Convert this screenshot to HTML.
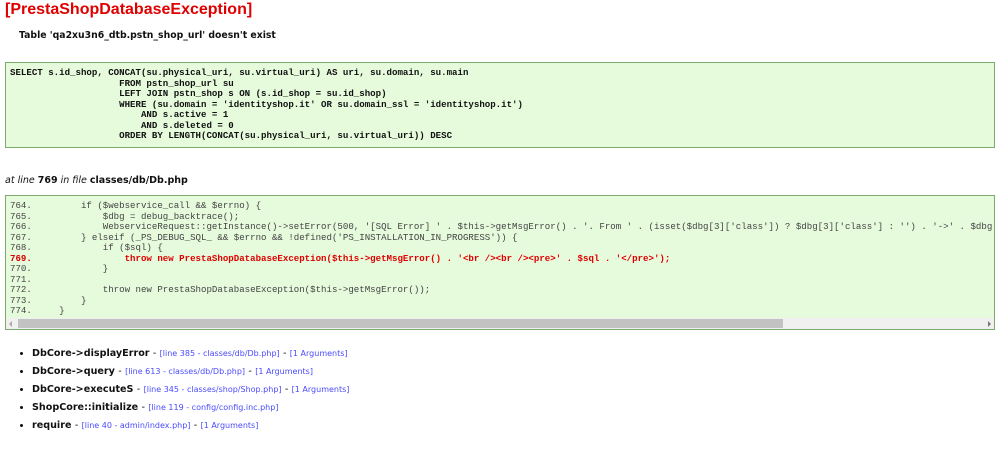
<!DOCTYPE html>
<html><head><style>
body{margin:0;background:#fff;font-family:"DejaVu Sans","Liberation Sans",sans-serif;width:1000px;height:457px;overflow:hidden;position:relative}
.a{position:absolute;white-space:pre}
h1{position:absolute;left:5px;top:1px;margin:0;font-family:"Liberation Sans",sans-serif;font-size:16px;color:#e00000;font-weight:bold}
.msg{left:19px;top:30px;font-size:9.3px;font-weight:bold;color:#111}
.box{position:absolute;left:5px;width:988px;background:#e6fadc;border:1px solid #7daa6f;overflow:hidden}
pre{margin:0;font-family:"Liberation Mono",monospace;font-size:9.1px;line-height:10.5px;color:#333}
.sql pre{font-weight:bold;color:#111;padding:5px 4px}
.code pre{color:#444;padding:5px 4px}
.red{color:#e00000;font-weight:bold}
.at{left:5px;top:175px;font-size:9.5px;color:#111}
ul{position:absolute;left:0;top:345px;margin:0;padding:0 0 0 32px;font-size:9.6px}
li{height:18px;line-height:18px;font-weight:bold;color:#111}
li span{font-weight:normal;font-size:8px;color:#4a4aff}
li i{font-style:normal;font-weight:normal;color:#111}
</style></head><body>
<h1>[PrestaShopDatabaseException]</h1>
<div class="a msg">Table 'qa2xu3n6_dtb.pstn_shop_url' doesn't exist</div>
<div class="box sql" style="top:62px;height:84px"><pre>SELECT s.id_shop, CONCAT(su.physical_uri, su.virtual_uri) AS uri, su.domain, su.main
                    FROM pstn_shop_url su
                    LEFT JOIN pstn_shop s ON (s.id_shop = su.id_shop)
                    WHERE (su.domain = 'identityshop.it' OR su.domain_ssl = 'identityshop.it')
                        AND s.active = 1
                        AND s.deleted = 0
                    ORDER BY LENGTH(CONCAT(su.physical_uri, su.virtual_uri)) DESC</pre></div>
<div class="a at"><i>at line </i><b>769</b><i> in file </i><b>classes/db/Db.php</b></div>
<div class="box code" style="top:195px;height:133px"><pre>764.         if ($webservice_call &amp;&amp; $errno) {
765.             $dbg = debug_backtrace();
766.             WebserviceRequest::getInstance()-&gt;setError(500, '[SQL Error] ' . $this-&gt;getMsgError() . '. From ' . (isset($dbg[3]['class']) ? $dbg[3]['class'] : '') . '-&gt;' . $dbg[3]['function'] . '() Query was : ' . $sql, 97);
767.         } elseif (_PS_DEBUG_SQL_ &amp;&amp; $errno &amp;&amp; !defined('PS_INSTALLATION_IN_PROGRESS')) {
768.             if ($sql) {
<span class="red">769.                 throw new PrestaShopDatabaseException($this-&gt;getMsgError() . '&lt;br /&gt;&lt;br /&gt;&lt;pre&gt;' . $sql . '&lt;/pre&gt;');</span>
770.             }
771.
772.             throw new PrestaShopDatabaseException($this-&gt;getMsgError());
773.         }
774.     }</pre>
<div style="position:absolute;left:0;top:122px;width:988px;height:11px;background:#f0f0f0"></div>
<div style="position:absolute;left:12px;top:123px;width:765px;height:9px;background:#c2c2c2"></div>
<div style="position:absolute;left:3px;top:125px;width:0;height:0;border-top:3px solid transparent;border-bottom:3px solid transparent;border-right:3px solid #aaa"></div>
<div style="position:absolute;left:982px;top:125px;width:0;height:0;border-top:3px solid transparent;border-bottom:3px solid transparent;border-left:3px solid #777"></div>
</div>
<ul>
<li>DbCore-&gt;displayError <i>-</i> <span>[line 385 - classes/db/Db.php]</span> <i>-</i> <span>[1 Arguments]</span></li>
<li>DbCore-&gt;query <i>-</i> <span>[line 613 - classes/db/Db.php]</span> <i>-</i> <span>[1 Arguments]</span></li>
<li>DbCore-&gt;executeS <i>-</i> <span>[line 345 - classes/shop/Shop.php]</span> <i>-</i> <span>[1 Arguments]</span></li>
<li>ShopCore::initialize <i>-</i> <span>[line 119 - config/config.inc.php]</span></li>
<li>require <i>-</i> <span>[line 40 - admin/index.php]</span> <i>-</i> <span>[1 Arguments]</span></li>
</ul>
</body></html>
